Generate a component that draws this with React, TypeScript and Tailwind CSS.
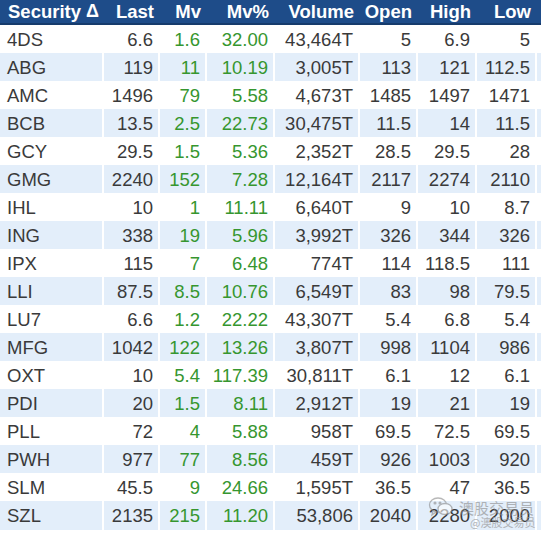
import React from 'react';

type Row = [string, string, string, string, string, string, string, string];

const rows: Row[] = [
  ['4DS', '6.6', '1.6', '32.00', '43,464T', '5', '6.9', '5'],
  ['ABG', '119', '11', '10.19', '3,005T', '113', '121', '112.5'],
  ['AMC', '1496', '79', '5.58', '4,673T', '1485', '1497', '1471'],
  ['BCB', '13.5', '2.5', '22.73', '30,475T', '11.5', '14', '11.5'],
  ['GCY', '29.5', '1.5', '5.36', '2,352T', '28.5', '29.5', '28'],
  ['GMG', '2240', '152', '7.28', '12,164T', '2117', '2274', '2110'],
  ['IHL', '10', '1', '11.11', '6,640T', '9', '10', '8.7'],
  ['ING', '338', '19', '5.96', '3,992T', '326', '344', '326'],
  ['IPX', '115', '7', '6.48', '774T', '114', '118.5', '111'],
  ['LLI', '87.5', '8.5', '10.76', '6,549T', '83', '98', '79.5'],
  ['LU7', '6.6', '1.2', '22.22', '43,307T', '5.4', '6.8', '5.4'],
  ['MFG', '1042', '122', '13.26', '3,807T', '998', '1104', '986'],
  ['OXT', '10', '5.4', '117.39', '30,811T', '6.1', '12', '6.1'],
  ['PDI', '20', '1.5', '8.11', '2,912T', '19', '21', '19'],
  ['PLL', '72', '4', '5.88', '958T', '69.5', '72.5', '69.5'],
  ['PWH', '977', '77', '8.56', '459T', '926', '1003', '920'],
  ['SLM', '45.5', '9', '24.66', '1,595T', '36.5', '47', '36.5'],
  ['SZL', '2135', '215', '11.20', '53,806', '2040', '2280', '2000'],
];

const headers = ['Last', 'Mv', 'Mv%', 'Volume', 'Open', 'High', 'Low'];

const cols = 'grid grid-cols-[102px_54px_45px_66px_83px_56px_57px_58px_1fr] gap-x-[2px]';

const App: React.FC = () => {
  return (
    <div className="relative w-[541px] h-[533px] overflow-hidden bg-white font-['Liberation_Sans',Arial,sans-serif]">
      {/* header */}
      <div className={`${cols} h-[25px] bg-[#1e4c89] border-b-2 border-[#163b6c] text-white font-bold text-[18.5px] leading-[23px]`}>
        <div className="pl-[8px] flex items-center gap-[5px]">
          Security
          <span className="text-[18px]">Δ</span>
        </div>
        {headers.map(h => (
          <div key={h} className="text-right pr-[4px]">{h}</div>
        ))}
        <div />
      </div>

      {/* rows */}
      {rows.map((r, i) => {
        const bg = i % 2 === 1 ? 'bg-[#e3eefa]' : 'bg-white';
        return (
          <div key={r[0]} className={`${cols} h-[28px] text-[18.5px] leading-[29px] text-[#3a3a3a]`}>
            {r.map((v, j) => (
              <div
                key={j}
                className={`${bg} ${j === 0 ? 'pl-[7px]' : 'text-right pr-[5px]'} ${
                  j === 2 || j === 3 ? 'text-[#36962f]' : ''
                }`}
              >
                {v}
              </div>
            ))}
            <div className={bg} />
          </div>
        );
      })}

      {/* watermark */}
      <div className="absolute left-[428px] top-[496px] flex items-center gap-[5px] opacity-60 text-[#8a8a8a]">
        <svg width="26" height="22" viewBox="0 0 26 22" fill="none" stroke="#8a8a8a" strokeWidth="1.3">
          <ellipse cx="10" cy="9" rx="8.5" ry="7" />
          <path d="M5 15 L4 19 L8 16" />
          <ellipse cx="17" cy="13" rx="7" ry="5.5" fill="white" />
          <circle cx="7" cy="7" r="0.9" fill="#8a8a8a" />
          <circle cx="12" cy="7" r="0.9" fill="#8a8a8a" />
        </svg>
        <span className="text-[15px] font-['Noto_Sans_CJK_SC',sans-serif] leading-none">澳股交易员</span>
      </div>
      <div className="absolute left-[470px] top-[517px] text-[11px] leading-none text-[#9a9a9a] opacity-70 font-['Noto_Sans_CJK_SC',sans-serif]">
        @澳股交易员
      </div>
    </div>
  );
};

export default App;
